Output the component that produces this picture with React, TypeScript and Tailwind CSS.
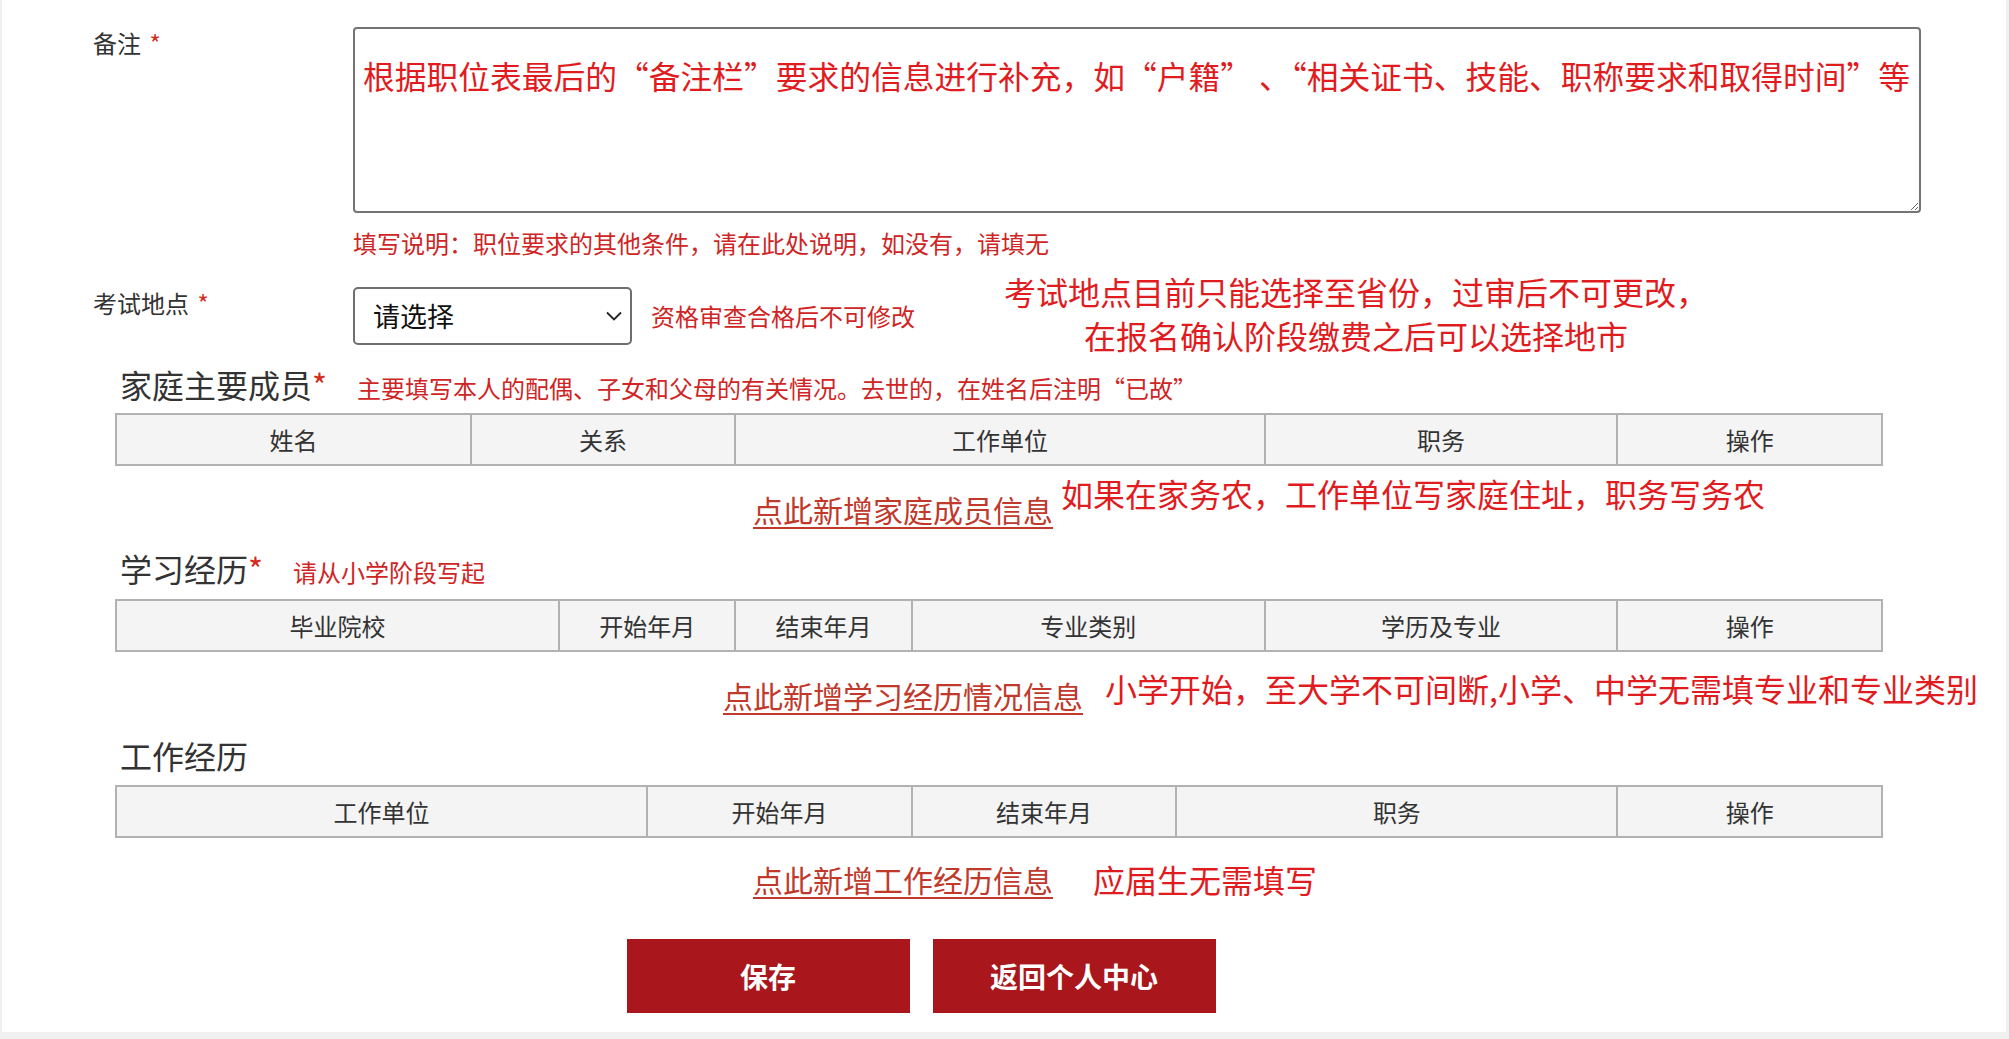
import React from "react";

const Star = () => <span className="text-[#d42a20]">*</span>;

function HeaderTable({ cols, mt }: { cols: { label: string; w: string }[]; mt: string }) {
  return (
    <div className={`${mt} ml-[113px] flex h-[53px] w-[1768px] border-2 border-[#b2b2b2] bg-[#f4f4f4]`}>
      {cols.map((c, i) => (
        <div
          key={i}
          className={`${c.w} flex items-center justify-center text-[24px] leading-[32px] text-[#333] ${i > 0 ? "border-l-2 border-[#b2b2b2]" : ""}`}
        >
          {c.label}
        </div>
      ))}
    </div>
  );
}

function AddLink({
  text,
  note,
  noteClass,
  mt,
}: {
  text: string;
  note: string;
  noteClass: string;
  mt: string;
}) {
  return (
    <div className={`${mt} flex w-[1802px] justify-center`}>
      <div className="relative">
        <a
          href="#"
          className="text-[30px] leading-[40px] text-[#c0392b] underline decoration-[2px] underline-offset-[5px]"
        >
          {text}
        </a>
        <span
          className={`absolute left-full whitespace-nowrap text-[32px] leading-[40px] text-[#e01c1f] ${noteClass}`}
        >
          {note}
        </span>
      </div>
    </div>
  );
}

function Heading({ title, star, hint, mt }: { title: string; star: boolean; hint?: string; mt: string }) {
  return (
    <div className={`${mt} ml-[113px] flex items-baseline pl-[5px]`}>
      <span className="text-[32px] leading-[40px] text-[#333]">
        {title}
        {star && <Star />}
      </span>
      {hint && <span className="ml-[30px] text-[24px] leading-[40px] text-[#cf2525]">{hint}</span>}
    </div>
  );
}

export default function App() {
  return (
    <div className="w-[2009px] min-h-[1039px] bg-[#f0f0f0] pl-[2px] pr-[3px] pb-[7px] font-['Noto_Sans_CJK_SC','Noto_Sans',sans-serif]">
      <div className="h-[1032px] bg-white pt-[27px]">
        {/* 备注 */}
        <div className="flex items-start">
          <div className="ml-[91px] w-[260px] text-[24px] leading-[32px] text-[#333]">
            备注 <span className="ml-[3px]"><Star /></span>
          </div>
          <textarea
            readOnly
            wrap="off"
            defaultValue="根据职位表最后的“备注栏”要求的信息进行补充，如“户籍” 、“相关证书、技能、职称要求和取得时间”等"
            className="h-[186px] w-[1568px] overflow-hidden rounded-[4px] border-2 border-[#747474] pl-[8px] pr-0 pt-[30px] text-[31.75px] leading-[32px] text-[#e01c1f] outline-none"
          />
        </div>
        <div className="ml-[351px] mt-[14px] text-[24px] leading-[32px] text-[#cf2525]">
          填写说明：职位要求的其他条件，请在此处说明，如没有，请填无
        </div>

        {/* 考试地点 */}
        <div className="mt-[28px] flex items-start">
          <div className="ml-[91px] w-[260px] text-[24px] leading-[32px] text-[#333]">
            考试地点 <span className="ml-[3px]"><Star /></span>
          </div>
          <div className="relative h-[58px] w-[279px]">
            <select className="h-[58px] w-[279px] appearance-none rounded-[5px] border-2 border-[#6e6e6e] bg-white pl-[18px] text-[27px] text-[#111] outline-none">
              <option>请选择</option>
            </select>
            <svg
              className="pointer-events-none absolute left-[253px] top-[24px]"
              width="16"
              height="10"
              viewBox="0 0 16 10"
              fill="none"
            >
              <path d="M1 1.5L8 8.5L15 1.5" stroke="#222" strokeWidth="1.8" />
            </svg>
          </div>
          <div className="ml-[19px] flex h-[58px] items-center text-[24px] text-[#cf2525]">
            资格审查合格后不可修改
          </div>
          <div className="-mt-[18px] ml-[89px] text-center text-[32px] leading-[44px] text-[#e01c1f]">
            考试地点目前只能选择至省份，过审后不可更改，
            <br />
            在报名确认阶段缴费之后可以选择地市
          </div>
        </div>

        {/* 家庭主要成员 */}
        <Heading
          mt="mt-[7px]"
          title="家庭主要成员"
          star
          hint="主要填写本人的配偶、子女和父母的有关情况。去世的，在姓名后注明“已故”"
        />
        <HeaderTable
          mt="mt-[5px]"
          cols={[
            { label: "姓名", w: "w-[20%]" },
            { label: "关系", w: "w-[15%]" },
            { label: "工作单位", w: "w-[30%]" },
            { label: "职务", w: "w-[20%]" },
            { label: "操作", w: "w-[15%]" },
          ]}
        />
        <AddLink
          mt="mt-[23px]"
          text="点此新增家庭成员信息"
          note="如果在家务农，工作单位写家庭住址，职务写务农"
          noteClass="top-[-16px] ml-[8px]"
        />

        {/* 学习经历 */}
        <Heading mt="mt-[19px]" title="学习经历" star hint="请从小学阶段写起" />
        <HeaderTable
          mt="mt-[7px]"
          cols={[
            { label: "毕业院校", w: "w-[25%]" },
            { label: "开始年月", w: "w-[10%]" },
            { label: "结束年月", w: "w-[10%]" },
            { label: "专业类别", w: "w-[20%]" },
            { label: "学历及专业", w: "w-[20%]" },
            { label: "操作", w: "w-[15%]" },
          ]}
        />
        <AddLink
          mt="mt-[23px]"
          text="点此新增学习经历情况信息"
          note="小学开始，至大学不可间断,小学、中学无需填专业和专业类别"
          noteClass="top-[-7px] ml-[22px]"
        />

        {/* 工作经历 */}
        <Heading mt="mt-[20px]" title="工作经历" star={false} />
        <HeaderTable
          mt="mt-[10px]"
          cols={[
            { label: "工作单位", w: "w-[30%]" },
            { label: "开始年月", w: "w-[15%]" },
            { label: "结束年月", w: "w-[15%]" },
            { label: "职务", w: "w-[25%]" },
            { label: "操作", w: "w-[15%]" },
          ]}
        />
        <AddLink
          mt="mt-[21px]"
          text="点此新增工作经历信息"
          note="应届生无需填写"
          noteClass="top-[0px] ml-[40px]"
        />

        {/* Buttons */}
        <div className="mt-[40px] flex w-[1838px] justify-center gap-[23px]">
          <button className="h-[74px] w-[283px] bg-[#a9161b] text-[28px] font-bold text-white">保存</button>
          <button className="h-[74px] w-[283px] bg-[#a9161b] text-[28px] font-bold text-white">返回个人中心</button>
        </div>
      </div>
    </div>
  );
}
